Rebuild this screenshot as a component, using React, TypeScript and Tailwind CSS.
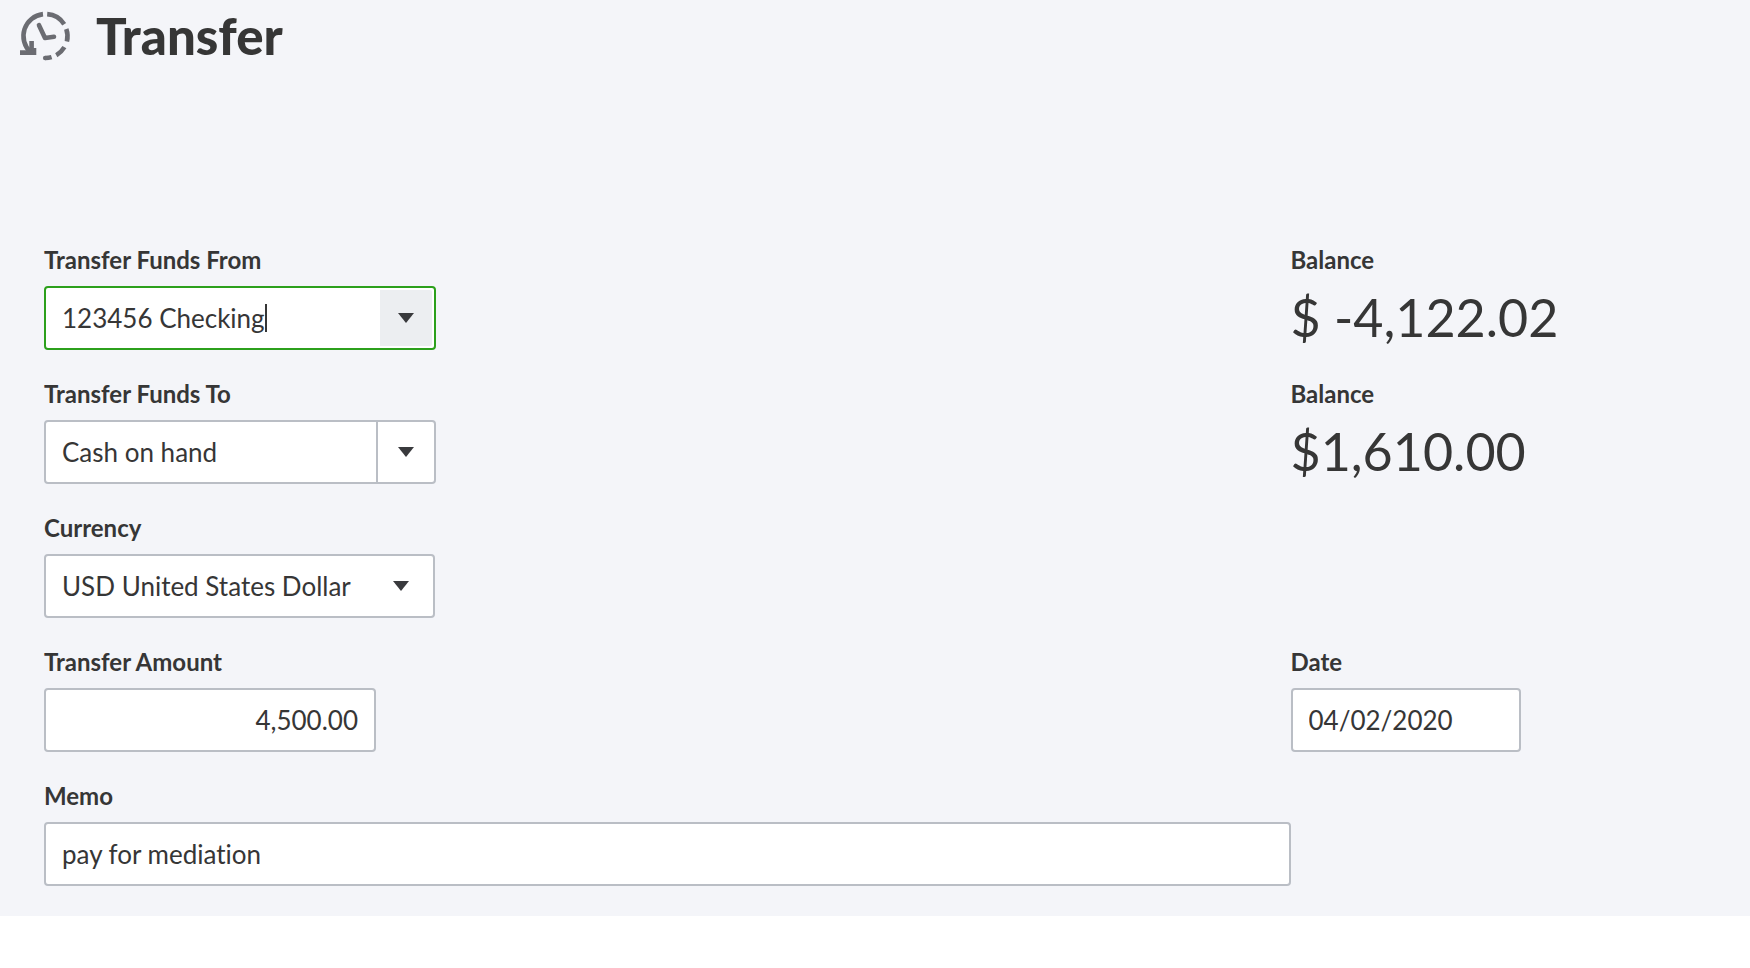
import React from "react";

interface IFieldProps {
    label: string;
    id: string;
    children: React.ReactNode;
}

const boxClass =
    "h-16 rounded-[4px] border-2 border-[#babec5] bg-white text-[26px] text-[#363636]";

function HistoryIcon() {
    return (
        <svg
            className="size-14 shrink-0"
            viewBox="0 0 56 56"
            fill="none"
            stroke="#6b6c72"
            strokeWidth="4.6"
            aria-hidden="true"
        >
            <path d="M14.6 44.2A22 22 0 0 1 27 6.1" />
            <path d="M31.2 6.1A22 22 0 0 1 48.2 16.2" />
            <path d="M50.3 21A22 22 0 0 1 50.9 33.5" />
            <path d="M48.4 39.2A22 22 0 0 1 40.3 47.2" />
            <path d="M35.6 49.1A22 22 0 0 1 29.2 50" />
            <circle cx="29.2" cy="50" r="2.3" fill="#6b6c72" stroke="none" />
            <path d="M4 44.6H15.6V33" />
            <path d="M13 44.6H18V40" />
            <path
                d="M23 17.2L29 30L38 28.8"
                strokeLinecap="round"
                strokeLinejoin="round"
            />
        </svg>
    );
}

function Arrow() {
    return (
        <svg className="h-[10px] w-4" viewBox="0 0 16 10" aria-hidden="true">
            <path d="M0 0H16L8 10Z" fill="#393a3d" />
        </svg>
    );
}

function Field({ label, id, children }: IFieldProps) {
    return (
        <div className="flex flex-col items-start gap-[14px]">
            <label htmlFor={id} className="text-2xl leading-6 font-bold">
                {label}
            </label>
            {children}
        </div>
    );
}

function Balance({ id, value }: { id: string; value: string }) {
    return (
        <Field label="Balance" id={id}>
            <output id={id} className="text-[52px] leading-[62px]">
                {value}
            </output>
        </Field>
    );
}

function App() {
    return (
        <main className="bg-[#f4f5f9] pb-[30px] font-[Lato,'Open_Sans',sans-serif] text-[#363636] [font-variant-ligatures:none]">
            <header className="flex h-[72px] items-center gap-6 px-4">
                <HistoryIcon />
                <h1 className="text-[51px] leading-[72px] font-black">
                    Transfer
                </h1>
            </header>

            <form className="grid grid-cols-[3fr_1fr] gap-y-8 px-11 pt-44">
                <Field label="Transfer Funds From" id="from">
                    <div className="flex h-16 w-[392px] items-center rounded-[4px] border-2 border-[#2ca01c] bg-white p-[2px] text-[26px]">
                        <input
                            id="from"
                            className="field-sizing-content pl-[14px] outline-none"
                            defaultValue="123456 Checking"
                        />
                        <span className="h-7 w-[2px] bg-[#363636]" />
                        <button
                            type="button"
                            aria-label="Show accounts"
                            className="ml-auto flex h-full w-[52px] items-center justify-center rounded-r-[2px] bg-[#eceef1]"
                        >
                            <Arrow />
                        </button>
                    </div>
                </Field>
                <Balance id="from-balance" value="$ -4,122.02" />

                <Field label="Transfer Funds To" id="to">
                    <div className={`flex w-[392px] ${boxClass}`}>
                        <input
                            id="to"
                            className="min-w-0 flex-1 pl-4 outline-none"
                            defaultValue="Cash on hand"
                        />
                        <button
                            type="button"
                            aria-label="Show accounts"
                            className="flex w-[58px] items-center justify-center border-l-2 border-[#babec5]"
                        >
                            <Arrow />
                        </button>
                    </div>
                </Field>
                <Balance id="to-balance" value="$1,610.00" />

                <div className="col-span-2">
                    <Field label="Currency" id="currency">
                        <div className="relative w-[391px]">
                            <select
                                id="currency"
                                className={`w-full appearance-none px-4 ${boxClass}`}
                            >
                                <option>USD United States Dollar</option>
                            </select>
                            <span className="pointer-events-none absolute inset-y-0 right-[26px] flex items-center">
                                <Arrow />
                            </span>
                        </div>
                    </Field>
                </div>

                <Field label="Transfer Amount" id="amount">
                    <input
                        id="amount"
                        className={`w-[332px] px-4 text-right ${boxClass}`}
                        defaultValue="4,500.00"
                    />
                </Field>
                <Field label="Date" id="date">
                    <input
                        id="date"
                        className={`w-[230px] px-4 ${boxClass}`}
                        defaultValue="04/02/2020"
                    />
                </Field>

                <Field label="Memo" id="memo">
                    <input
                        id="memo"
                        className={`w-full px-4 ${boxClass}`}
                        defaultValue="pay for mediation"
                    />
                </Field>
            </form>
        </main>
    );
}

export default App;
